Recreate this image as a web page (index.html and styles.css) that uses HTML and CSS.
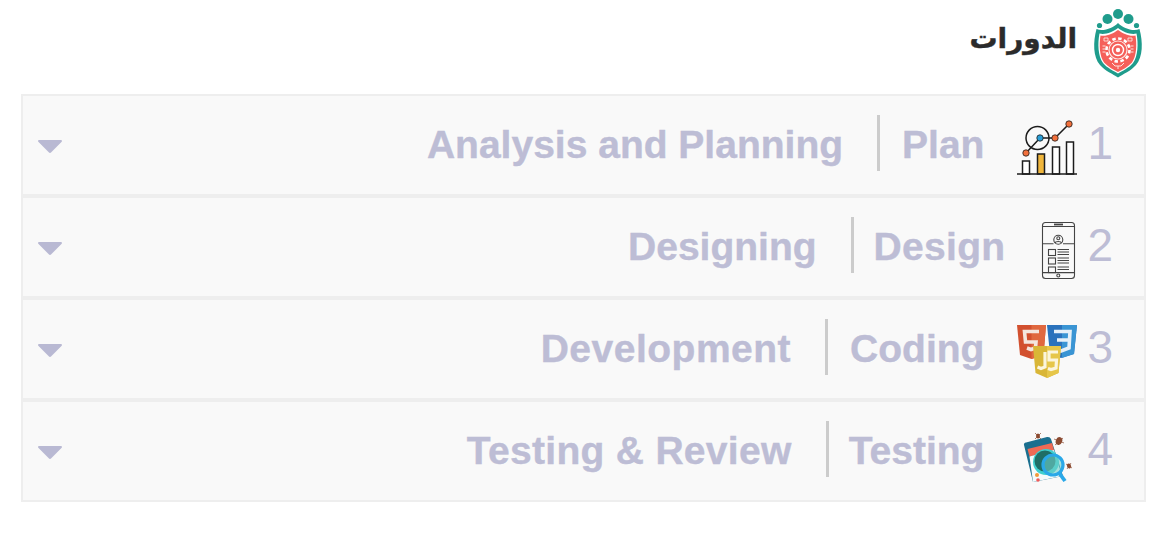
FILE: index.html
```html
<!DOCTYPE html>
<html lang="ar" dir="rtl">
<head>
<meta charset="utf-8">
<title>الدورات</title>
<link rel="stylesheet" href="styles.css">
</head>
<body>
<header class="page-head">
  <svg class="logo" viewBox="0 0 50 70" aria-hidden="true">
    <circle cx="25" cy="6" r="5" fill="#1f9c8c"/>
    <circle cx="14.500" cy="11" r="5" fill="#1f9c8c"/>
    <circle cx="35.500" cy="11" r="5" fill="#1f9c8c"/>
    <circle cx="6.500" cy="17.500" r="2.600" fill="#1f9c8c"/>
    <circle cx="43.500" cy="17.500" r="2.600" fill="#1f9c8c"/>
    <path d="M25 15C20 20 10 24 3.500 21C0 34 0 49 7 57C12 63 20 66 25 69.500C30 66 38 63 43 57C50 49 50 34 46.500 21C40 24 30 20 25 15Z" fill="#1f9c8c"/>
    <path d="M25 20C20 24 12 27 6.500 25.500C4.500 36 5 48 10 55C14 60 21 63 25 65.500C29 63 36 60 40 55C45 48 45.500 36 43.500 25.500C38 27 30 24 25 20Z" fill="#fff"/>
    <path d="M25 22C20 25.500 13 29 7.500 27.500C6 37 6.500 48 11 54.500C15 59 21 62 25 64C29 62 35 59 39 54.500C43.500 48 44 37 42.500 27.500C37 29 30 25.500 25 22Z" fill="#f5605a"/>
    <circle cx="25" cy="42" r="11.500" fill="none" stroke="#fff" stroke-width="2.600" stroke-dasharray="3.500 2.500"/>
    <circle cx="25" cy="42" r="9" fill="none" stroke="#fde4df" stroke-width="1.200"/>
    <circle cx="25" cy="42" r="5.500" fill="none" stroke="#fff" stroke-width="1.400"/>
    <circle cx="25" cy="42" r="2.200" fill="#fff"/>
    <path d="M11 30h4v3h-4zM35 30h4v3h-4z" fill="none" stroke="#fde4df" stroke-width=".9"/>
    <path d="M9.500 38h3M9.500 41h3M9.500 44h3M37.500 38h3M37.500 41h3M37.500 44h3M19 55l3 3h6l3-3M25 58v3" fill="none" stroke="#fde4df" stroke-width="1"/>
  </svg>
  <h1 class="page-title">الدورات</h1>
</header>

<main class="phases">
  <article class="phase">
    <span class="phase-num">1</span>
    <svg class="phase-icon" viewBox="0 0 60 60" aria-hidden="true">
      <g fill="#fff" stroke="#1c1c1c" stroke-width="1.500">
        <rect x="5.500" y="43" width="7" height="13"/>
        <rect x="20.500" y="36" width="7" height="20" fill="#f0b63c"/>
        <rect x="35.500" y="29" width="7" height="27"/>
        <rect x="49.500" y="24" width="7" height="32"/>
      </g>
      <path d="M0 56H60" stroke="#1c1c1c" stroke-width="1.500"/>
      <circle cx="20.500" cy="20" r="11.500" fill="none" stroke="#1c1c1c" stroke-width="1.500"/>
      <path d="M9 35L23 20H38L52 6" fill="none" stroke="#1c1c1c" stroke-width="1.500"/>
      <g stroke="#1c1c1c" stroke-width=".8">
        <circle cx="9" cy="35" r="3.200" fill="#f2703c"/>
        <circle cx="23" cy="20" r="3.200" fill="#2a9fd8"/>
        <circle cx="38" cy="20" r="3.200" fill="#f2703c"/>
        <circle cx="52" cy="6" r="3.200" fill="#f2703c"/>
      </g>
    </svg>
    <span class="phase-short">Plan</span>
    <span class="phase-long">Analysis and Planning</span>
    <svg class="phase-caret" viewBox="0 0 24 13" aria-hidden="true"><path d="M1 0H23a1 1 0 0 1 .7 1.700L13 12.500a1.400 1.400 0 0 1-2 0L.3 1.700A1 1 0 0 1 1 0Z"/></svg>
  </article>

  <article class="phase">
    <span class="phase-num">2</span>
    <svg class="phase-icon phase-icon-narrow" viewBox="0 0 39 60" aria-hidden="true">
      <g transform="translate(4 2)" fill="none" stroke="#444" stroke-width="1.100">
        <rect x=".5" y=".5" width="32" height="56" rx="3"/>
        <path d="M12 2.500H21" stroke-width="1.800"/>
        <path d="M.5 4.500H32.500M.5 21.700H11.500M21 21.700H32.500M.5 50.600H32.500"/>
        <circle cx="16.300" cy="17.700" r="4.500"/>
        <circle cx="16.300" cy="16.300" r="1.500"/>
        <path d="M13 21C13.500 19 19 19 19.500 21"/>
        <rect x="6.500" y="27.500" width="7" height="6"/>
        <rect x="6.500" y="36" width="7" height="6"/>
        <rect x="6.500" y="45" width="7" height="5.600"/>
        <path d="M15.500 27.500H27M15.500 30H27M15.500 32.500H27M15.500 36H27M15.500 38.500H27M15.500 41H27M15.500 45H27M15.500 47.500H27"/>
        <circle cx="16.300" cy="53.500" r="1.500"/>
      </g>
    </svg>
    <span class="phase-short phase-short-wide">Design</span>
    <span class="phase-long">Designing</span>
    <svg class="phase-caret" viewBox="0 0 24 13" aria-hidden="true"><path d="M1 0H23a1 1 0 0 1 .7 1.700L13 12.500a1.400 1.400 0 0 1-2 0L.3 1.700A1 1 0 0 1 1 0Z"/></svg>
  </article>

  <article class="phase">
    <span class="phase-num">3</span>
    <svg class="phase-icon" viewBox="0 0 60 60" aria-hidden="true">
      <path d="M0 3H29L26.500 33L14.500 37L3 33Z" fill="#d2502f"/>
      <path d="M14.500 3H29L26.500 33L14.500 37Z" fill="#e0683f"/>
      <path d="M22 9.500H7.500L8.500 20H19L18.500 26L14 27.500L10 26" fill="none" stroke="#f4e6de" stroke-width="3.600"/>
      <path d="M30 3H60L57 32L44 36L33 32Z" fill="#2a72bc"/>
      <path d="M45 3H60L57 32L45 36Z" fill="#3a95d4"/>
      <path d="M37 9.500H53L52 26L44 29L37 26M40 18H52" fill="none" stroke="#e6f0f8" stroke-width="3.600"/>
      <path d="M16 24H44L41.500 51L30 56L18.500 51Z" fill="#d9b637"/>
      <path d="M30 24H44L41.500 51L30 56Z" fill="#e6c649"/>
      <path d="M28 30V45L24 46.500L20.500 45M41 30H32V38H39.500L39 46L34 47.500L31 46.500" fill="none" stroke="#fbf5dc" stroke-width="3.200"/>
    </svg>
    <span class="phase-short">Coding</span>
    <span class="phase-long phase-long-wide">Development</span>
    <svg class="phase-caret" viewBox="0 0 24 13" aria-hidden="true"><path d="M1 0H23a1 1 0 0 1 .7 1.700L13 12.500a1.400 1.400 0 0 1-2 0L.3 1.700A1 1 0 0 1 1 0Z"/></svg>
  </article>

  <article class="phase">
    <span class="phase-num">4</span>
    <svg class="phase-icon" viewBox="0 0 60 60" aria-hidden="true">
      <path d="M7 21Q6.500 19 9 18.500L30 13Q33 12.500 34 15L46 52L16 58Z" fill="#1b6f8f"/>
      <path d="M10.500 25L35 19L37 26L12.500 32.500Z" fill="#ef6a55"/>
      <path d="M12.500 32.500L37 26L45 52L16 58Z" fill="#f5fbfb"/>
      <circle cx="29" cy="38" r="13" fill="#3fd0cf"/>
      <circle cx="28" cy="37" r="10.500" fill="#1f6e66"/>
      <circle cx="36" cy="41" r="10" fill="#6fcfc8" fill-opacity=".6" stroke="#2aa8e8" stroke-width="3.200"/>
      <path d="M42.500 49.500L48 57" stroke="#2aa8e8" stroke-width="3.800"/>
      <circle cx="20" cy="51" r="2" fill="#f29a3a"/>
      <circle cx="21" cy="56" r="1.800" fill="#ef5a5a"/>
      <g fill="#8b4a30">
        <ellipse cx="21" cy="12" rx="2" ry="2.500"/>
        <ellipse cx="42" cy="17" rx="3.200" ry="4" transform="rotate(20 42 17)"/>
        <ellipse cx="52" cy="42" rx="2" ry="2.500" transform="rotate(-30 52 42)"/>
      </g>
      <path d="M37 15l10 4M38 21l8-7M49 40l6 4M50 45l4-6M18 9l6 6M24 9l-6 6" stroke="#8b4a30" stroke-width=".7"/>
    </svg>
    <span class="phase-short phase-short-tight">Testing</span>
    <span class="phase-long phase-long-mid">Testing &amp; Review</span>
    <svg class="phase-caret" viewBox="0 0 24 13" aria-hidden="true"><path d="M1 0H23a1 1 0 0 1 .7 1.700L13 12.500a1.400 1.400 0 0 1-2 0L.3 1.700A1 1 0 0 1 1 0Z"/></svg>
  </article>
</main>
</body>
</html>
```

FILE: styles.css
```css
* { box-sizing: border-box; }

html, body {
  margin: 0;
  background: #fff;
}

body {
  font-family: "Liberation Sans", Arial, sans-serif;
  padding: 8px 30px 0 21px;
}

.page-head {
  display: flex;
  align-items: flex-start;
  height: 86px;
  padding-right: 3px;
}

.logo {
  width: 50px;
  height: 70px;
  flex: none;
}

.page-title {
  margin: 9px 16px 0 0;
  font-family: "DejaVu Sans", sans-serif;
  font-size: 28px;
  font-weight: 700;
  line-height: 44px;
  color: #2b2b2b;
  -webkit-text-stroke: .4px #2b2b2b;
}

.phases {
  display: flex;
  flex-direction: column;
  border: 2px solid #eee;
}

.phase {
  display: flex;
  align-items: center;
  height: 98px;
  padding: 0 31px 0 15px;
  background: #f9f9f9;
  color: #bdbdd5;
  font-weight: 700;
}

.phase + .phase {
  height: 102px;
  border-top: 4px solid #eee;
}

.phase-num {
  font-size: 46px;
  font-weight: 400;
  line-height: 1;
  margin: 0 0 4px 10px;
}

.phase-icon {
  width: 60px;
  height: 60px;
  flex: none;
  margin: 6px 0 0 33px;
}

.phase-icon-narrow { width: 39px; }

.phase-short,
.phase-long {
  font-size: 39px;
  line-height: 1.2;
  -webkit-text-stroke: .4px #bdbdd5;
}

.phase-short {
  padding-left: 22px;
  border-left: 3px solid #ccc;
  height: 56px;
  line-height: 60px;
  margin-top: -4px;
}

.phase-short-tight { padding-left: 20px; }

.phase-short-wide {
  letter-spacing: .3px;
  padding-left: 20px;
}

.phase-long {
  margin-right: 34px;
}

.phase-long-wide { letter-spacing: .5px; }
.phase-long-mid { letter-spacing: .3px; }

.phase-caret {
  width: 24px;
  height: 13px;
  margin: 3px auto 0 0;
  fill: #b9b9d3;
}
```
